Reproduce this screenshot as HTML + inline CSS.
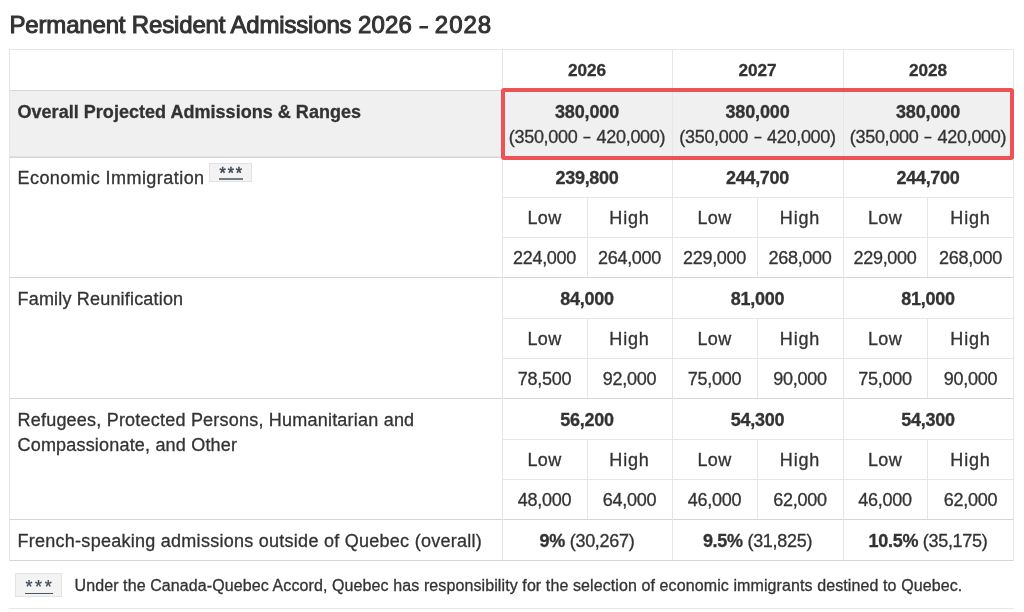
<!DOCTYPE html><html><head><meta charset="utf-8"><style>
html,body{margin:0;padding:0;background:#fff;width:1024px;height:612px;overflow:hidden;position:relative}
body{font-family:"Liberation Sans", sans-serif;color:#333}
#wrap{position:absolute;left:0;top:0;width:1024px;height:612px;will-change:transform}
.l{position:absolute;box-sizing:content-box}
.t{position:absolute;white-space:nowrap;line-height:0;height:0;-webkit-text-stroke:0.3px #333}
.badge{position:absolute;background:#f3f3f3;border:1px solid #e3e3e3;box-sizing:border-box}
.stars{position:absolute;font-size:16px;line-height:16px;color:#3c4656;letter-spacing:0px;-webkit-text-stroke:0.5px #3c4656}
.title{position:absolute;left:9.5px;top:9.5px;font-size:24px;line-height:30px;letter-spacing:-0.17px;-webkit-text-stroke:1px #333;color:#333;white-space:nowrap}
</style></head><body>
<div id="wrap"><div class="title">Permanent Resident Admissions <span style="letter-spacing:0.2px">2026</span> <span style="display:inline-block;transform:scaleX(0.6);margin:0 -2px 0 -1.5px">–</span> <span style="letter-spacing:1px">2028</span></div>
<div class="l" style="left:9px;top:90px;width:1005px;height:67px;background:#f0f0f0"></div>
<div class="l" style="left:9px;top:49px;width:1005px;height:1px;background:#e6e6e6"></div>
<div class="l" style="left:9px;top:90px;width:1005px;height:1px;background:#d6d6d6"></div>
<div class="l" style="left:9px;top:157px;width:1005px;height:1px;background:#d6d6d6"></div>
<div class="l" style="left:502px;top:197px;width:511px;height:1px;background:#e6e6e6"></div>
<div class="l" style="left:502px;top:237px;width:511px;height:1px;background:#e6e6e6"></div>
<div class="l" style="left:9px;top:277px;width:1005px;height:1px;background:#d6d6d6"></div>
<div class="l" style="left:502px;top:318px;width:511px;height:1px;background:#e6e6e6"></div>
<div class="l" style="left:502px;top:358px;width:511px;height:1px;background:#e6e6e6"></div>
<div class="l" style="left:9px;top:398px;width:1005px;height:1px;background:#d6d6d6"></div>
<div class="l" style="left:502px;top:439px;width:511px;height:1px;background:#e6e6e6"></div>
<div class="l" style="left:502px;top:479px;width:511px;height:1px;background:#e6e6e6"></div>
<div class="l" style="left:9px;top:519px;width:1005px;height:1px;background:#d6d6d6"></div>
<div class="l" style="left:9px;top:560px;width:1005px;height:1px;background:#d6d6d6"></div>
<div class="l" style="left:9px;top:156px;width:1005px;height:1px;background:#e2e2e2"></div>
<div class="l" style="left:9px;top:49px;width:1px;height:512px;background:#e6e6e6"></div>
<div class="l" style="left:1013px;top:49px;width:1px;height:512px;background:#e6e6e6"></div>
<div class="l" style="left:502px;top:49px;width:1px;height:511px;background:#e6e6e6"></div>
<div class="l" style="left:672px;top:49px;width:1px;height:511px;background:#e6e6e6"></div>
<div class="l" style="left:843px;top:49px;width:1px;height:511px;background:#e6e6e6"></div>
<div class="l" style="left:587px;top:197px;width:1px;height:80px;background:#e6e6e6"></div>
<div class="l" style="left:587px;top:318px;width:1px;height:80px;background:#e6e6e6"></div>
<div class="l" style="left:587px;top:439px;width:1px;height:80px;background:#e6e6e6"></div>
<div class="l" style="left:757px;top:197px;width:1px;height:80px;background:#e6e6e6"></div>
<div class="l" style="left:757px;top:318px;width:1px;height:80px;background:#e6e6e6"></div>
<div class="l" style="left:757px;top:439px;width:1px;height:80px;background:#e6e6e6"></div>
<div class="l" style="left:927px;top:197px;width:1px;height:80px;background:#e6e6e6"></div>
<div class="l" style="left:927px;top:318px;width:1px;height:80px;background:#e6e6e6"></div>
<div class="l" style="left:927px;top:439px;width:1px;height:80px;background:#e6e6e6"></div>
<div class="t" style="left:337.00px;width:500px;text-align:center;top:70.04px;font-size:17.2px;letter-spacing:0px;font-weight:bold;-webkit-text-stroke:0.3px #333;">2026</div>
<div class="t" style="left:507.50px;width:500px;text-align:center;top:70.04px;font-size:17.2px;letter-spacing:0px;font-weight:bold;-webkit-text-stroke:0.3px #333;">2027</div>
<div class="t" style="left:678.00px;width:500px;text-align:center;top:70.04px;font-size:17.2px;letter-spacing:0px;font-weight:bold;-webkit-text-stroke:0.3px #333;">2028</div>
<div class="t" style="left:17.50px;top:111.96px;font-size:18px;letter-spacing:0.03px;font-weight:bold;-webkit-text-stroke:0.3px #333;">Overall Projected Admissions &amp; Ranges</div>
<div class="t" style="left:337.00px;width:500px;text-align:center;top:111.96px;font-size:18px;letter-spacing:-0.13px;font-weight:bold;-webkit-text-stroke:0.3px #333;">380,000</div>
<div class="t" style="left:337.00px;width:500px;text-align:center;top:136.96px;font-size:18px;letter-spacing:-0.3px;">(350,000 <span style="display:inline-block;transform:translateY(-0.8px) scaleX(0.68)">–</span> 420,000)</div>
<div class="t" style="left:507.50px;width:500px;text-align:center;top:111.96px;font-size:18px;letter-spacing:-0.13px;font-weight:bold;-webkit-text-stroke:0.3px #333;">380,000</div>
<div class="t" style="left:507.50px;width:500px;text-align:center;top:136.96px;font-size:18px;letter-spacing:-0.3px;">(350,000 <span style="display:inline-block;transform:translateY(-0.8px) scaleX(0.68)">–</span> 420,000)</div>
<div class="t" style="left:678.00px;width:500px;text-align:center;top:111.96px;font-size:18px;letter-spacing:-0.13px;font-weight:bold;-webkit-text-stroke:0.3px #333;">380,000</div>
<div class="t" style="left:678.00px;width:500px;text-align:center;top:136.96px;font-size:18px;letter-spacing:-0.3px;">(350,000 <span style="display:inline-block;transform:translateY(-0.8px) scaleX(0.68)">–</span> 420,000)</div>
<div class="t" style="left:17.50px;top:177.76px;font-size:18px;letter-spacing:0.45px;">Economic Immigration</div>
<div class="t" style="left:337.00px;width:500px;text-align:center;top:177.76px;font-size:18px;letter-spacing:-0.3px;font-weight:bold;-webkit-text-stroke:0.3px #333;">239,800</div>
<div class="t" style="left:507.50px;width:500px;text-align:center;top:177.76px;font-size:18px;letter-spacing:-0.3px;font-weight:bold;-webkit-text-stroke:0.3px #333;">244,700</div>
<div class="t" style="left:678.00px;width:500px;text-align:center;top:177.76px;font-size:18px;letter-spacing:-0.3px;font-weight:bold;-webkit-text-stroke:0.3px #333;">244,700</div>
<div class="t" style="left:294.50px;width:500px;text-align:center;top:217.76px;font-size:18px;letter-spacing:0.3px;">Low</div>
<div class="t" style="left:294.50px;width:500px;text-align:center;top:257.96px;font-size:18px;letter-spacing:-0.3px;">224,000</div>
<div class="t" style="left:379.50px;width:500px;text-align:center;top:217.76px;font-size:18px;letter-spacing:0.85px;">High</div>
<div class="t" style="left:379.50px;width:500px;text-align:center;top:257.96px;font-size:18px;letter-spacing:-0.3px;">264,000</div>
<div class="t" style="left:464.50px;width:500px;text-align:center;top:217.76px;font-size:18px;letter-spacing:0.3px;">Low</div>
<div class="t" style="left:464.50px;width:500px;text-align:center;top:257.96px;font-size:18px;letter-spacing:-0.3px;">229,000</div>
<div class="t" style="left:550.00px;width:500px;text-align:center;top:217.76px;font-size:18px;letter-spacing:0.85px;">High</div>
<div class="t" style="left:550.00px;width:500px;text-align:center;top:257.96px;font-size:18px;letter-spacing:-0.3px;">268,000</div>
<div class="t" style="left:635.00px;width:500px;text-align:center;top:217.76px;font-size:18px;letter-spacing:0.3px;">Low</div>
<div class="t" style="left:635.00px;width:500px;text-align:center;top:257.96px;font-size:18px;letter-spacing:-0.3px;">229,000</div>
<div class="t" style="left:720.50px;width:500px;text-align:center;top:217.76px;font-size:18px;letter-spacing:0.85px;">High</div>
<div class="t" style="left:720.50px;width:500px;text-align:center;top:257.96px;font-size:18px;letter-spacing:-0.3px;">268,000</div>
<div class="t" style="left:17.50px;top:298.76px;font-size:18px;letter-spacing:0.187px;">Family Reunification</div>
<div class="t" style="left:337.00px;width:500px;text-align:center;top:298.76px;font-size:18px;letter-spacing:-0.3px;font-weight:bold;-webkit-text-stroke:0.3px #333;">84,000</div>
<div class="t" style="left:507.50px;width:500px;text-align:center;top:298.76px;font-size:18px;letter-spacing:-0.3px;font-weight:bold;-webkit-text-stroke:0.3px #333;">81,000</div>
<div class="t" style="left:678.00px;width:500px;text-align:center;top:298.76px;font-size:18px;letter-spacing:-0.3px;font-weight:bold;-webkit-text-stroke:0.3px #333;">81,000</div>
<div class="t" style="left:294.50px;width:500px;text-align:center;top:338.76px;font-size:18px;letter-spacing:0.3px;">Low</div>
<div class="t" style="left:294.50px;width:500px;text-align:center;top:378.76px;font-size:18px;letter-spacing:-0.3px;">78,500</div>
<div class="t" style="left:379.50px;width:500px;text-align:center;top:338.76px;font-size:18px;letter-spacing:0.85px;">High</div>
<div class="t" style="left:379.50px;width:500px;text-align:center;top:378.76px;font-size:18px;letter-spacing:-0.3px;">92,000</div>
<div class="t" style="left:464.50px;width:500px;text-align:center;top:338.76px;font-size:18px;letter-spacing:0.3px;">Low</div>
<div class="t" style="left:464.50px;width:500px;text-align:center;top:378.76px;font-size:18px;letter-spacing:-0.3px;">75,000</div>
<div class="t" style="left:550.00px;width:500px;text-align:center;top:338.76px;font-size:18px;letter-spacing:0.85px;">High</div>
<div class="t" style="left:550.00px;width:500px;text-align:center;top:378.76px;font-size:18px;letter-spacing:-0.3px;">90,000</div>
<div class="t" style="left:635.00px;width:500px;text-align:center;top:338.76px;font-size:18px;letter-spacing:0.3px;">Low</div>
<div class="t" style="left:635.00px;width:500px;text-align:center;top:378.76px;font-size:18px;letter-spacing:-0.3px;">75,000</div>
<div class="t" style="left:720.50px;width:500px;text-align:center;top:338.76px;font-size:18px;letter-spacing:0.85px;">High</div>
<div class="t" style="left:720.50px;width:500px;text-align:center;top:378.76px;font-size:18px;letter-spacing:-0.3px;">90,000</div>
<div class="t" style="left:17.50px;top:419.56px;font-size:18px;letter-spacing:0.214px;">Refugees, Protected Persons, Humanitarian and</div>
<div class="t" style="left:17.50px;top:444.56px;font-size:18px;letter-spacing:0.19px;">Compassionate, and Other</div>
<div class="t" style="left:337.00px;width:500px;text-align:center;top:419.56px;font-size:18px;letter-spacing:-0.3px;font-weight:bold;-webkit-text-stroke:0.3px #333;">56,200</div>
<div class="t" style="left:507.50px;width:500px;text-align:center;top:419.56px;font-size:18px;letter-spacing:-0.3px;font-weight:bold;-webkit-text-stroke:0.3px #333;">54,300</div>
<div class="t" style="left:678.00px;width:500px;text-align:center;top:419.56px;font-size:18px;letter-spacing:-0.3px;font-weight:bold;-webkit-text-stroke:0.3px #333;">54,300</div>
<div class="t" style="left:294.50px;width:500px;text-align:center;top:459.66px;font-size:18px;letter-spacing:0.3px;">Low</div>
<div class="t" style="left:294.50px;width:500px;text-align:center;top:499.66px;font-size:18px;letter-spacing:-0.3px;">48,000</div>
<div class="t" style="left:379.50px;width:500px;text-align:center;top:459.66px;font-size:18px;letter-spacing:0.85px;">High</div>
<div class="t" style="left:379.50px;width:500px;text-align:center;top:499.66px;font-size:18px;letter-spacing:-0.3px;">64,000</div>
<div class="t" style="left:464.50px;width:500px;text-align:center;top:459.66px;font-size:18px;letter-spacing:0.3px;">Low</div>
<div class="t" style="left:464.50px;width:500px;text-align:center;top:499.66px;font-size:18px;letter-spacing:-0.3px;">46,000</div>
<div class="t" style="left:550.00px;width:500px;text-align:center;top:459.66px;font-size:18px;letter-spacing:0.85px;">High</div>
<div class="t" style="left:550.00px;width:500px;text-align:center;top:499.66px;font-size:18px;letter-spacing:-0.3px;">62,000</div>
<div class="t" style="left:635.00px;width:500px;text-align:center;top:459.66px;font-size:18px;letter-spacing:0.3px;">Low</div>
<div class="t" style="left:635.00px;width:500px;text-align:center;top:499.66px;font-size:18px;letter-spacing:-0.3px;">46,000</div>
<div class="t" style="left:720.50px;width:500px;text-align:center;top:459.66px;font-size:18px;letter-spacing:0.85px;">High</div>
<div class="t" style="left:720.50px;width:500px;text-align:center;top:499.66px;font-size:18px;letter-spacing:-0.3px;">62,000</div>
<div class="t" style="left:17.50px;top:541.36px;font-size:18px;letter-spacing:0.265px;">French-speaking admissions outside of Quebec (overall)</div>
<div class="t" style="left:337.00px;width:500px;text-align:center;top:541.36px;font-size:18px;letter-spacing:-0.3px;"><b style="-webkit-text-stroke:0.3px #333">9%</b> (30,267)</div>
<div class="t" style="left:507.50px;width:500px;text-align:center;top:541.36px;font-size:18px;letter-spacing:-0.3px;"><b style="-webkit-text-stroke:0.3px #333">9.5%</b> (31,825)</div>
<div class="t" style="left:678.00px;width:500px;text-align:center;top:541.36px;font-size:18px;letter-spacing:-0.3px;"><b style="-webkit-text-stroke:0.3px #333">10.5%</b> (35,175)</div>
<div class="badge" style="left:209px;top:163px;width:43px;height:19px"></div>
<div class="stars" style="left:219.5px;top:165.8px;letter-spacing:1.9px">***</div>
<div class="l" style="left:219px;top:178px;width:24px;height:2px;background:#737b87"></div>
<div class="badge" style="left:15px;top:573px;width:47px;height:24px"></div>
<div class="stars" style="left:25.5px;top:578.6px;font-size:18px;letter-spacing:2.6px;-webkit-text-stroke:0.2px #3c4656">***</div>
<div class="l" style="left:25px;top:592.5px;width:28px;height:1.5px;background:#4a5568"></div>
<div class="t" style="left:74.50px;top:585.86px;font-size:16px;letter-spacing:0.1px;">Under the Canada-Quebec Accord, Quebec has responsibility for the selection of economic immigrants destined to Quebec.</div>
<div class="l" style="left:9px;top:608px;width:1005px;height:1px;background:#e8e8e8"></div>
<div class="l" style="left:501px;top:88px;width:505px;height:64px;border:4px solid #ef5253;border-radius:3px"></div>
</div></body></html>
